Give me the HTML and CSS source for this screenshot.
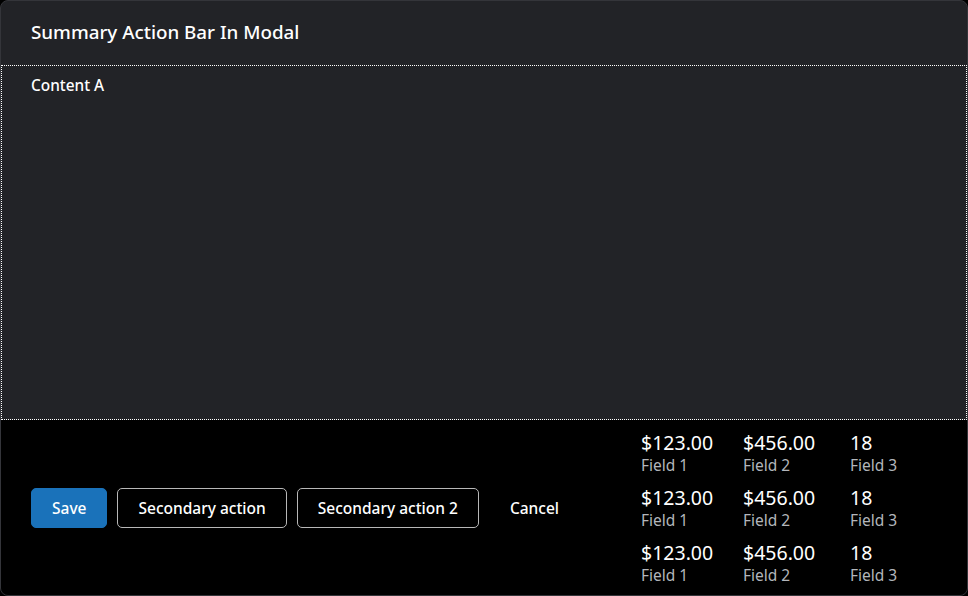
FILE: index.html
```html
<!DOCTYPE html>
<html>
<head>
<meta charset="utf-8">
<link rel="stylesheet" href="styles.css">
</head>
<body>
<div class="modal">
  <header class="modal-header">Summary Action Bar In Modal</header>
  <main class="modal-content">Content A</main>
  <footer class="modal-footer">
    <div class="actions">
      <button class="btn btn-primary">Save</button>
      <button class="btn btn-secondary">Secondary action</button>
      <button class="btn btn-secondary">Secondary action 2</button>
      <button class="btn btn-text">Cancel</button>
    </div>
    <div class="summary">
      <div class="item"><div class="value">$123.00</div><div class="label">Field 1</div></div>
      <div class="item"><div class="value">$456.00</div><div class="label">Field 2</div></div>
      <div class="item"><div class="value">18</div><div class="label">Field 3</div></div>
      <div class="item"><div class="value">$123.00</div><div class="label">Field 1</div></div>
      <div class="item"><div class="value">$456.00</div><div class="label">Field 2</div></div>
      <div class="item"><div class="value">18</div><div class="label">Field 3</div></div>
      <div class="item"><div class="value">$123.00</div><div class="label">Field 1</div></div>
      <div class="item"><div class="value">$456.00</div><div class="label">Field 2</div></div>
      <div class="item"><div class="value">18</div><div class="label">Field 3</div></div>
    </div>
  </footer>
</div>
</body>
</html>
```
FILE: styles.css
```css
* { box-sizing: border-box; }
html, body { margin: 0; padding: 0; background: #000; }
body { font-family: "Noto Sans", "Open Sans", sans-serif; color: #fff; }
.modal {
  width: 968px;
  height: 596px;
  border: 1px solid #34353a;
  border-radius: 8px;
  background: #222327;
  display: flex;
  flex-direction: column;
  overflow: hidden;
}
.modal-header {
  height: 64px;
  flex: none;
  display: flex;
  align-items: center;
  padding: 0 30px 2px;
  font-size: 18.8px;
  font-weight: 500;
}
.modal-content {
  flex: 1;
  outline: 1px dotted #fff;
  outline-offset: -1px;
  padding: 10px 30px;
  font-size: 15.4px;
  font-weight: 500;
}
.modal-footer {
  flex: none;
  height: 175px;
  background: #000;
  display: flex;
  align-items: center;
  padding: 0 30px;
}
.actions { display: flex; gap: 10px; }
.btn {
  font-family: inherit;
  font-size: 15.5px;
  font-weight: 500;
  height: 40px;
  padding: 0 20px;
  border-radius: 5px;
  color: #fff;
  cursor: pointer;
}
.btn-primary { background: #1a72ba; border: 1px solid #1a72ba; }
.btn-secondary { background: #000; border: 1px solid #b8b8b8; }
.btn-text { background: transparent; border: 1px solid transparent; }
.summary {
  margin-left: 61px;
  display: grid;
  grid-template-columns: 72px 77px auto;
  column-gap: 30px;
  row-gap: 11px;
}
.value { font-size: 19.5px; line-height: 24px; white-space: nowrap; }
.label { font-size: 15.5px; line-height: 20px; color: #b3b6bb; }
```
